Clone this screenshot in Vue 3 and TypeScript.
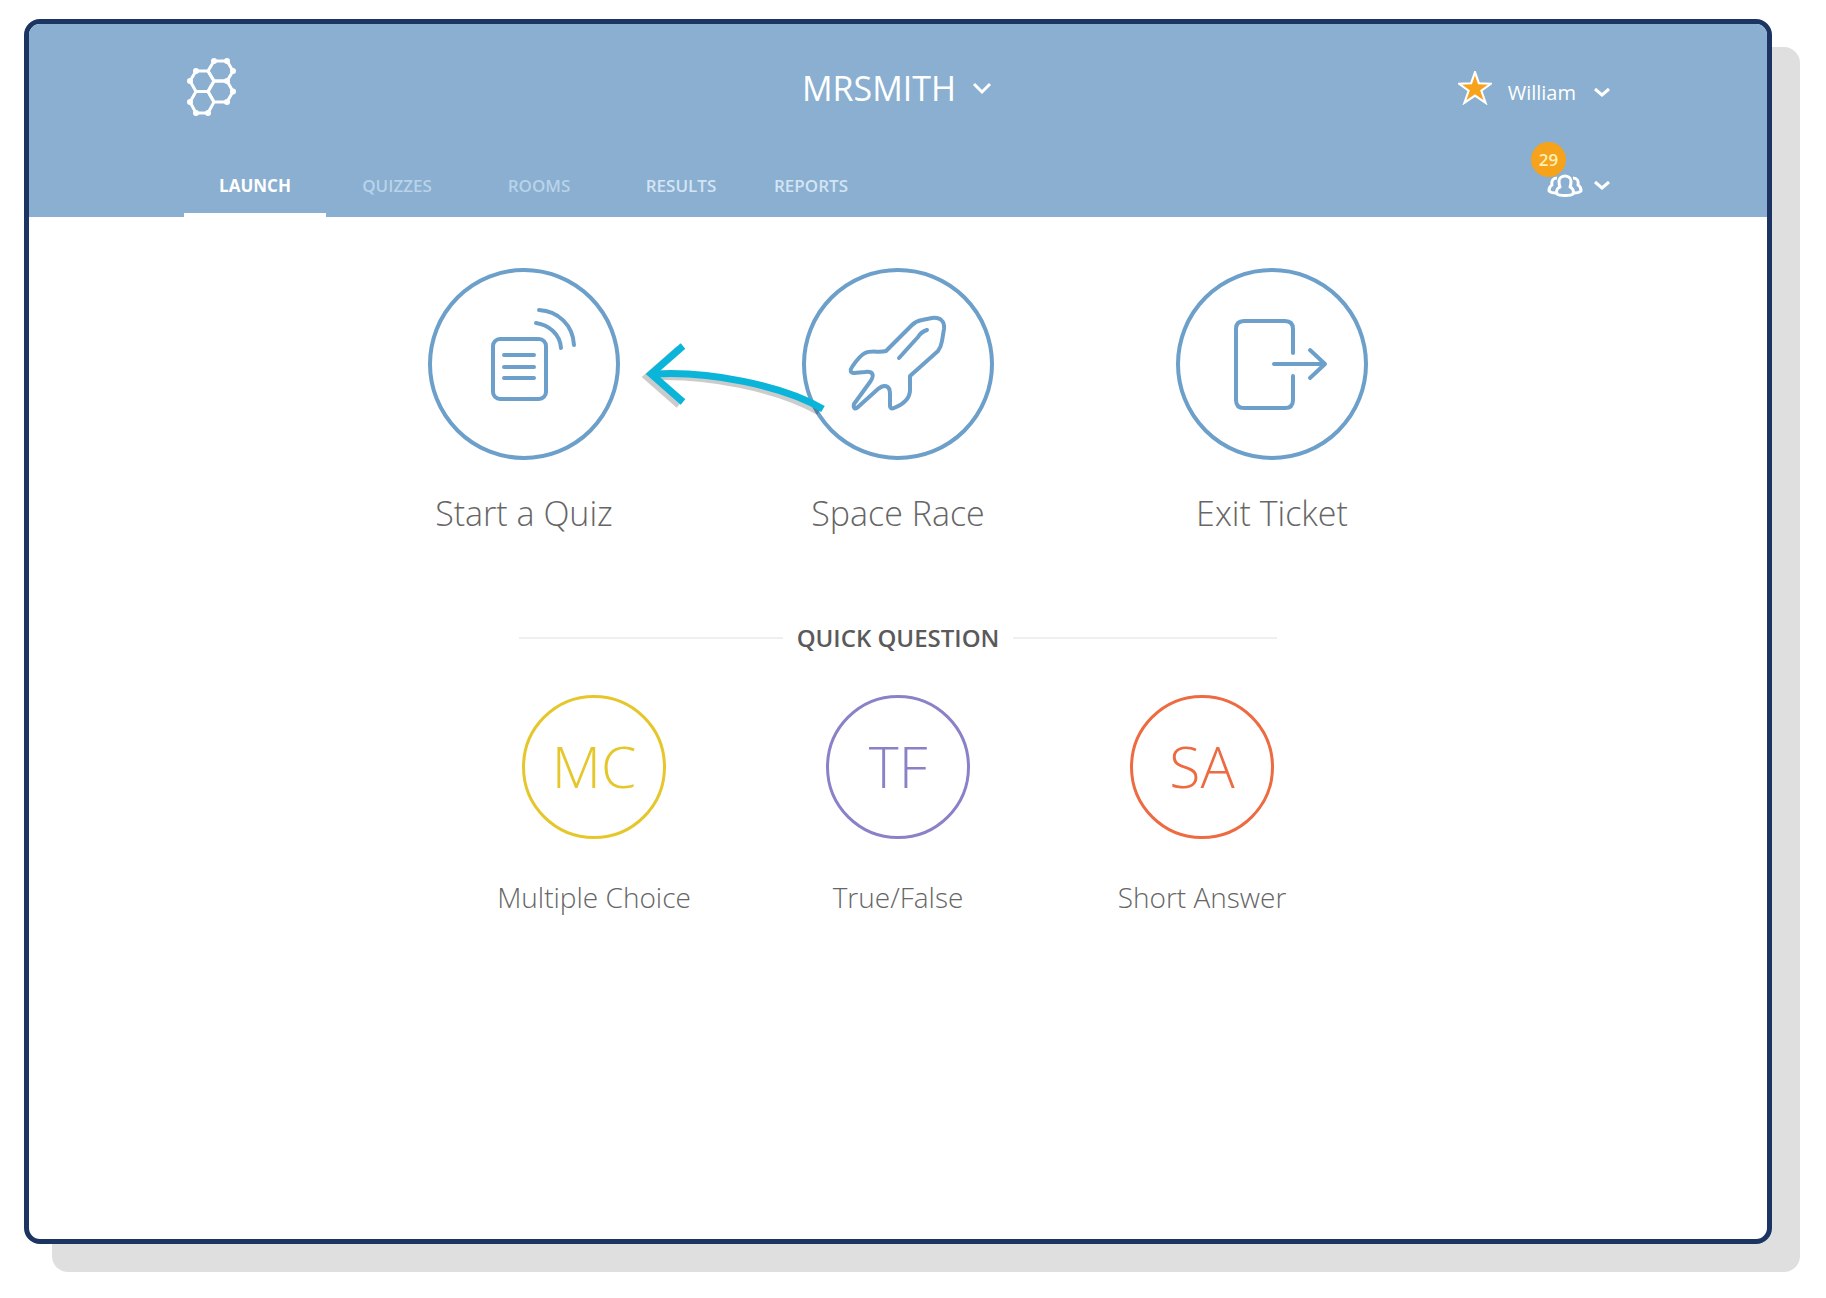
<script setup lang="ts">
interface Tab {
  label: string
  state: 'active' | 'normal' | 'faint'
}

interface Activity {
  id: 'quiz' | 'race' | 'exit'
  label: string
}

interface QuickQuestion {
  code: string
  label: string
  tone: string
}

const tabs: Tab[] = [
  { label: 'LAUNCH', state: 'active' },
  { label: 'QUIZZES', state: 'faint' },
  { label: 'ROOMS', state: 'faint' },
  { label: 'RESULTS', state: 'normal' },
  { label: 'REPORTS', state: 'normal' },
]

const activities: Activity[] = [
  { id: 'quiz', label: 'Start a Quiz' },
  { id: 'race', label: 'Space Race' },
  { id: 'exit', label: 'Exit Ticket' },
]

const quickQuestions: QuickQuestion[] = [
  { code: 'MC', label: 'Multiple Choice', tone: 'yellow' },
  { code: 'TF', label: 'True/False', tone: 'purple' },
  { code: 'SA', label: 'Short Answer', tone: 'orange' },
]
</script>

<template>
  <div class="window">
    <header class="header">
      <div class="bar">
        <a class="logo" href="#" aria-label="Home">
          <svg width="54" height="64" viewBox="-3 0 54 64" fill="none" stroke="#fff" stroke-width="3">
            <path d="M27 5H40L46 15L40 25H27L21 15Z" />
            <path d="M9 15H21L27 25L21 35.500H9L3 25Z" />
            <path d="M27 25H40L46 35.500L40 46H27L21 35.500Z" />
            <path d="M9 35.500H21L27 46L21 57H9L3 46Z" />
            <path
              stroke-width="6"
              stroke-linecap="round"
              d="M27 5h0M40 5h0M46 15h0M40 25h0M9 15h0M3 25h0M46 35.500h0M40 46h0M3 46h0M9 57h0M21 57h0"
            />
          </svg>
        </a>
        <button class="room" type="button">
          MRSMITH
          <svg width="20" height="13" viewBox="0 0 20 13"><path class="chevron" d="M2 2L10 10L18 2" /></svg>
        </button>
        <div class="account">
          <svg class="star" width="34" height="34" viewBox="0 0 32 32">
            <path
              d="M16 1L19.600 11.500L31 12L22 18.600L26 30L16 23.200L6 30L10 18.600L1 12L12.400 11.500Z"
              fill="#f6a21a"
              stroke="#fff"
              stroke-width="2"
            />
          </svg>
          <button class="user" type="button">
            William
            <svg width="16" height="11" viewBox="0 0 16 11"><path class="chevron" d="M1 2L8 8L15 2" /></svg>
          </button>
        </div>
      </div>
      <div class="subbar">
        <nav class="tabs">
          <a v-for="tab in tabs" :key="tab.label" href="#" class="tab" :class="tab.state">{{ tab.label }}</a>
        </nav>
        <button class="students" type="button" aria-label="Students">
          <svg width="36" height="24" viewBox="0 0 36 24" fill="none" stroke="#fff" stroke-width="3" stroke-linejoin="round">
            <path d="M10 20C9 17 10 14 13 13C12 11 12 9 12 7C12 4 15 2 18 2C21 2 24 4 24 7C24 9 24 11 23 13C26 14 27 17 26 20C24 22 12 22 10 20Z" />
            <path d="M9 19C5 19 3 18 2 17C2 14 3 12 5 11C4 7 6 4 10 4" />
            <path d="M27 19C31 19 33 18 34 17C34 14 33 12 31 11C32 7 30 4 26 4" />
          </svg>
          <svg width="16" height="11" viewBox="0 0 16 11"><path class="chevron" d="M1 2L8 8L15 2" /></svg>
          <span class="badge">29</span>
        </button>
      </div>
    </header>

    <main class="main">
      <section class="activities">
        <button v-for="item in activities" :key="item.id" class="activity" type="button">
          <span class="ring">
            <svg v-if="item.id === 'quiz'" class="glyph" viewBox="0 0 192 192">
              <rect x="65" y="71" width="53" height="60" rx="7" />
              <path d="M76 87H106M76 99H106M76 110H106" />
              <path d="M108 55C121 57 132 66 133 80M111 42C130 43 145 57 146 77" />
            </svg>
            <svg v-else-if="item.id === 'race'" class="glyph" viewBox="0 0 192 192">
              <path
                d="M84 83L110 57Q114 53 120 52L130 50C138 49 143 53 142 61L140 73Q139 79 136 83L108 108V122C108 133 97 138 92 140C89 141 88 140 88 138V126C88 117 82 116 76 121L56 139C53 142 51 140 52 136L68 114C73 107 71 103 63 104L52 105C48 105 48 102 50 99C54 93 59 87 63 85C69 82 77 85 84 83Z"
              />
              <path d="M97 90L116 69Q119 64 125 62" />
            </svg>
            <svg v-else class="glyph" viewBox="0 0 192 192">
              <path d="M117 85V61Q117 53 109 53H68Q60 53 60 61V132Q60 140 68 140H109Q117 140 117 132V108" />
              <path d="M98 96H149M134 82L149 96L134 110" />
            </svg>
          </span>
          <span class="activity-label">{{ item.label }}</span>
        </button>
        <svg class="pointer" width="190" height="80" viewBox="0 0 190 80" fill="none" stroke-width="7" aria-hidden="true">
          <g class="pointer-shadow">
            <path d="M45 10L13 38L45 66" />
            <path d="M17 38C70 35 144 49 185 73" />
          </g>
          <g class="pointer-line">
            <path d="M45 10L13 38L45 66" />
            <path d="M17 38C70 35 144 49 185 73" />
          </g>
        </svg>
      </section>

      <h2 class="divider">QUICK QUESTION</h2>

      <section class="quick">
        <button v-for="item in quickQuestions" :key="item.code" class="question" type="button">
          <span class="code" :class="item.tone">{{ item.code }}</span>
          <span class="question-label">{{ item.label }}</span>
        </button>
      </section>
    </main>
  </div>
</template>

<style>
body {
  background: #fff;
}
</style>

<style scoped>
.window {
  box-sizing: border-box;
  min-height: calc(100vh - 73px);
  margin: 19px 54px 54px 24px;
  border: 5px solid #1c3461;
  border-radius: 16px;
  background: #fff;
  box-shadow: 28px 28px 0 #dfdfdf;
  font-family: 'Open Sans', 'Noto Sans', sans-serif;
  display: flow-root;
}

button {
  padding: 0;
  border: 0;
  background: none;
  color: inherit;
  font: inherit;
  cursor: pointer;
}

a {
  color: inherit;
  text-decoration: none;
}

svg {
  display: block;
  flex: none;
}

.header {
  padding: 0 157px 0 155px;
  border-radius: 11px 11px 0 0;
  background: #8aafd0;
  color: #fff;
}

.bar {
  display: grid;
  grid-template-columns: 1fr auto 1fr;
  align-items: center;
  height: 128px;
}

.logo {
  justify-self: start;
}

.room {
  display: flex;
  align-items: center;
  gap: 16px;
  font-size: 34px;
}

.account {
  display: flex;
  align-items: center;
  justify-self: end;
  gap: 16px;
}

.user {
  display: flex;
  align-items: center;
  gap: 18px;
  padding-top: 8px;
  font-size: 20px;
}

.chevron {
  fill: none;
  stroke: #fff;
  stroke-width: 3;
}

.subbar {
  display: flex;
  justify-content: space-between;
  height: 65px;
}

.tabs {
  display: grid;
  grid-template-columns: repeat(4, 142px) 118px;
}

.tab {
  box-sizing: border-box;
  padding-top: 4px;
  border-bottom: 4px solid transparent;
  color: #d3e5f5;
  font-size: 17px;
  font-weight: 600;
  line-height: 60px;
  text-align: center;
  height: 65px;
}

.tab.active {
  border-color: #fff;
  color: #fff;
  font-weight: 700;
}

.tab.faint {
  color: #b9d3ea;
}

.students {
  position: relative;
  display: flex;
  align-items: center;
  gap: 11px;
  padding-top: 2px;
}

.badge {
  position: absolute;
  top: -10px;
  left: -16px;
  width: 35px;
  border-radius: 50%;
  background: #f6a21a;
  color: #fdf0b8;
  font-size: 17px;
  font-weight: 600;
  line-height: 35px;
  text-align: center;
}

.main {
  display: flex;
  flex-direction: column;
  align-items: center;
  color: #666;
}

.activities {
  position: relative;
  display: grid;
  grid-template-columns: repeat(3, 374px);
  margin-top: 51px;
}

.activity {
  display: flex;
  flex-direction: column;
  align-items: center;
  gap: 29px;
}

.ring {
  box-sizing: border-box;
  width: 192px;
  height: 192px;
  border: 4px solid #6c9fc9;
  border-radius: 50%;
}

.glyph {
  width: 192px;
  height: 192px;
  margin: -4px;
  fill: none;
  stroke: #6c9fc9;
  stroke-width: 4;
  stroke-linecap: round;
  stroke-linejoin: round;
}

.activity-label {
  font-size: 34px;
  font-weight: 300;
  line-height: 48px;
}

.pointer {
  position: absolute;
  top: 68px;
  left: 301px;
}

.pointer-line {
  stroke: #0bb5da;
}

.pointer-shadow {
  stroke: #000;
  opacity: 0.2;
  transform: translate(-4px, 3px);
}

.divider {
  display: flex;
  align-items: center;
  gap: 14px;
  width: 758px;
  margin: 85px 0 0;
  color: #5a5a5a;
  font-size: 24px;
  font-weight: 600;
  line-height: 32px;
}

.divider::before,
.divider::after {
  content: '';
  flex: 1;
  height: 2px;
  background: #efefef;
}

.quick {
  display: grid;
  grid-template-columns: repeat(3, 304px);
  margin-top: 41px;
}

.question {
  display: flex;
  flex-direction: column;
  align-items: center;
  gap: 37px;
}

.code {
  box-sizing: border-box;
  width: 144px;
  height: 144px;
  border: 3px solid;
  border-radius: 50%;
  font-size: 57px;
  font-weight: 300;
  line-height: 136px;
}

.yellow {
  color: #e5c72c;
}

.purple {
  color: #8a82c8;
}

.orange {
  color: #ee6a40;
}

.question-label {
  font-size: 28px;
  font-weight: 300;
  line-height: 42px;
}
</style>
